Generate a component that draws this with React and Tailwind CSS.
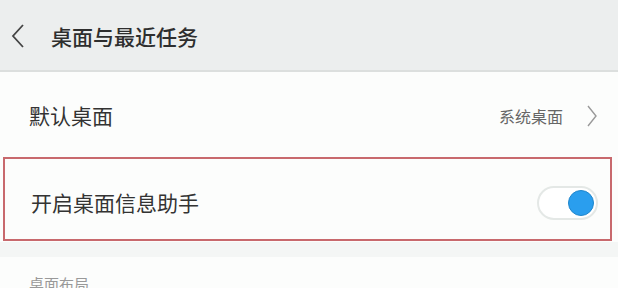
import React, { useState } from "react";

const App = () => {
  const [assistant, setAssistant] = useState(true);

  return (
    <div className="w-[618px] h-[288px] overflow-hidden bg-[#fcfdfc] font-['Noto_Sans_CJK_SC',sans-serif]">
      {/* header */}
      <div className="h-[72px] bg-[#eceeee] border-b-2 border-[#dcdfde] flex items-center pt-[2px]">
        <svg width="16" height="26" viewBox="0 0 16 26" className="ml-[10px]">
          <path d="M13 2 L3 13 L13 24" fill="none" stroke="#444" strokeWidth="1.8" />
        </svg>
        <h1 className="ml-[25px] text-[21px] font-medium text-[#2e2e2e] leading-none">桌面与最近任务</h1>
      </div>

      {/* default desktop */}
      <div className="h-[85px] flex items-center pl-[29px] pr-[20px] pt-[2px]">
        <p className="text-[21px] text-[#333] flex-grow">默认桌面</p>
        <span className="text-[16px] text-[#666]">系统桌面</span>
        <svg width="12" height="22" viewBox="0 0 12 22" className="ml-[23px]">
          <path d="M2 1 L10 11 L2 21" fill="none" stroke="#999" strokeWidth="1.4" />
        </svg>
      </div>

      {/* assistant toggle, highlighted */}
      <div className="h-[84px] mx-[3px] w-[609px] border-2 border-[#c8696d] flex items-center pl-[26px] pr-[12px] pt-[7px]">
        <p className="text-[21px] text-[#333] flex-grow">开启桌面信息助手</p>
        <button
          onClick={() => setAssistant(!assistant)}
          className={`w-[61px] h-[34px] rounded-full border-2 border-[#e4e8e6] bg-white flex items-center px-[2px] ${
            assistant ? "justify-end" : "justify-start"
          }`}
        >
          <span className="w-[26px] h-[26px] rounded-full bg-[#2a9eee] border border-[#1f86cc]" />
        </button>
      </div>

      <div className="h-[15px] bg-[#f4f6f5] mt-[1px]" />

      <div className="pl-[29px] pt-[16px]">
        <p className="text-[15px] text-[#999]">桌面布局</p>
      </div>
    </div>
  );
};

export default App;
